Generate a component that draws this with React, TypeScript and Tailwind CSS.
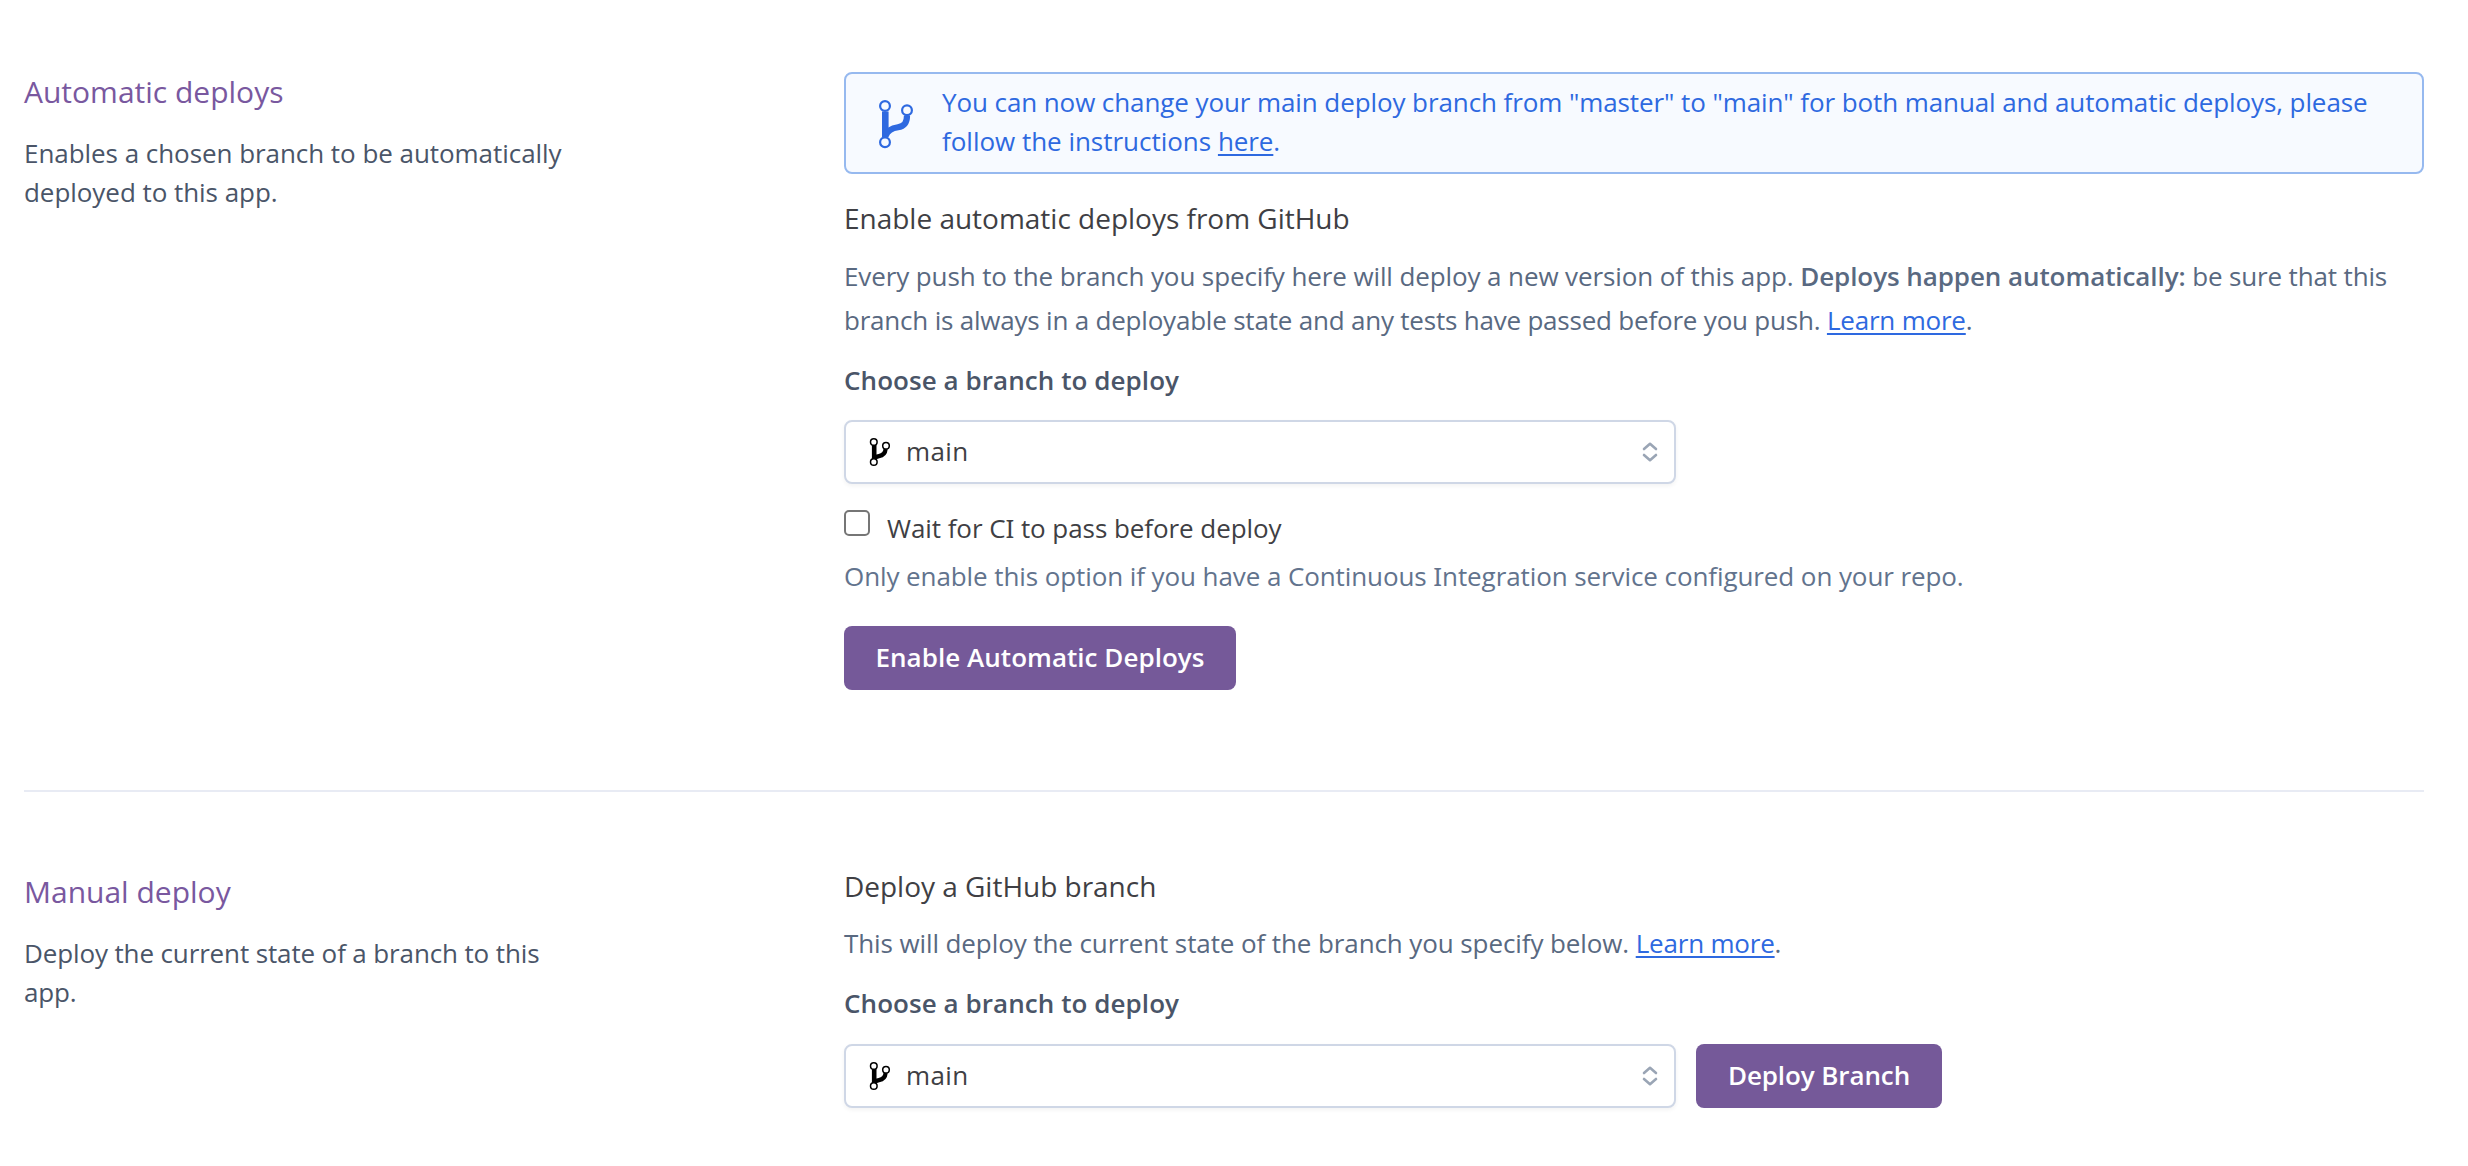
function BannerBranchIcon() {
  return (
    <svg width="36" height="50" viewBox="0 0 36 50" fill="none" stroke="#2e69e0" className="shrink-0">
      <path d="M7.3 12.5V38" strokeWidth="6.6" />
      <path d="M29 16.5C29 24.5 26 27.3 20 28.3C13 29.4 9.5 31.5 7.8 36.5" strokeWidth="6.2" />
      <circle cx="7" cy="7" r="4.9" strokeWidth="2.2" fill="#f7faff" />
      <circle cx="29" cy="11.3" r="4.9" strokeWidth="2.2" fill="#f7faff" />
      <circle cx="7" cy="43.3" r="4.9" strokeWidth="2.2" fill="#f7faff" />
    </svg>
  );
}

function BranchIcon() {
  return (
    <svg width="22" height="30" viewBox="0 0 22 30" fill="none" stroke="#000" className="shrink-0">
      <path d="M5.2 8V22" strokeWidth="4.6" />
      <path d="M16.6 12C16.2 17 13 18.6 10 19.1C7.5 19.5 6 20.2 5 22" strokeWidth="4.2" />
      <circle cx="4.8" cy="5" r="3.3" strokeWidth="1.5" fill="#fff" />
      <circle cx="17" cy="8.7" r="3.3" strokeWidth="1.5" fill="#fff" />
      <circle cx="4.8" cy="25" r="3.3" strokeWidth="1.5" fill="#fff" />
    </svg>
  );
}

function BranchSelect() {
  return (
    <div className="flex h-16 w-[832px] items-center rounded-lg border-2 border-[#cfd7e6] bg-white pr-4 pl-[23px] shadow-[0_2px_4px_rgba(0,0,0,0.05)]">
      <BranchIcon />
      <span className="mb-0.5 ml-[15px] text-[26px] leading-[40px] tracking-[0.4px] text-[#3f3f44]">main</span>
      <svg
        width="16"
        height="22"
        viewBox="0 0 16 22"
        fill="none"
        stroke="#9aa5b5"
        strokeWidth="2.6"
        strokeLinecap="round"
        strokeLinejoin="round"
        className="ml-auto"
      >
        <path d="M2 8L8 2.8L14 8M2 14L8 19.2L14 14" />
      </svg>
    </div>
  );
}

const link = "text-[#2e69e0] underline decoration-2 underline-offset-[3px]";

export default function App() {
  return (
    <main className="min-h-[1166px] bg-white pr-[44px] pl-6 font-['Open_Sans','Noto_Sans',sans-serif] text-[26px]">
      <section className="flex h-[790px] pt-[72px]">
        <div className="w-[820px] shrink-0">
          <h2 className="text-[30px] leading-[39px] text-[#79589f]">Automatic deploys</h2>
          <p className="mt-[23px] w-[560px] leading-[39px] tracking-[-0.05px] text-[#4a5568]">
            Enables a chosen branch to be automatically deployed to this app.
          </p>
        </div>
        <div className="w-[1580px]">
          <div className="flex h-[102px] items-start rounded-lg border-2 border-[#96b9ef] bg-[#f7faff]">
            <div className="pt-[25px] pl-8">
              <BannerBranchIcon />
            </div>
            <p className="mt-[9px] ml-[28px] leading-[39px] tracking-[-0.091px] text-[#2e69e0]">
              You can now change your main deploy branch from "master" to "main" for both manual and automatic deploys, please
              <br />
              <span className="tracking-[-0.02px]">follow the instructions </span>
              <a className={link}>here</a>.
            </p>
          </div>
          <h3 className="mt-6 text-[28px] leading-[40px] tracking-[-0.012px] text-[#3f3f44]">
            Enable automatic deploys from GitHub
          </h3>
          <p className="mt-4 leading-[44px] text-[#596981]">
            <span className="tracking-[-0.11px]">
              Every push to the branch you specify here will deploy a new version of this app.{" "}
            </span>
            <b className="font-semibold tracking-[-0.075px]">Deploys happen automatically:</b>
            <span className="tracking-[-0.15px]"> be sure that this</span>
            <br />
            <span className="tracking-[-0.205px]">
              branch is always in a deployable state and any tests have passed before you push.{" "}
              <a className={link}>Learn more</a>.
            </span>
          </p>
          <h4 className="mt-[18px] leading-[40px] font-semibold tracking-[0.065px] text-[#4a5568]">
            Choose a branch to deploy
          </h4>
          <div className="mt-5">
            <BranchSelect />
          </div>
          <label className="mt-6 flex items-start">
            <span className="mt-0.5 size-[26px] rounded-[5px] border-2 border-[#767676] bg-white" />
            <span className="ml-[17px] leading-[40px] tracking-[-0.07px] text-[#3f3f44]">
              Wait for C<span className="font-['Noto_Sans']">I</span> to pass before deploy
            </span>
          </label>
          <p className="mt-2 leading-[40px] tracking-[-0.09px] text-[#62738d]">
            Only enable this option if you have a Continuous <span className="font-['Noto_Sans']">I</span>ntegration
            service configured on your repo.
          </p>
          <button className="mt-[30px] flex h-16 w-[392px] items-center justify-center rounded-lg bg-[#755999] pb-0.5 leading-[40px] font-semibold tracking-[0.036px] text-white">
            Enable Automatic Deploys
          </button>
        </div>
      </section>
      <hr className="h-0.5 border-0 bg-[#e8ebf4]" />
      <section className="flex">
        <div className="w-[820px] shrink-0 pt-20">
          <h2 className="text-[30px] leading-[39px] text-[#79589f]">Manual deploy</h2>
          <p className="mt-[23px] w-[540px] leading-[39px] tracking-[-0.13px] text-[#4a5568]">
            Deploy the current state of a branch to this app.
          </p>
        </div>
        <div className="pt-[74px]">
          <h3 className="text-[28px] leading-[40px] tracking-[-0.02px] text-[#3f3f44]">Deploy a GitHub branch</h3>
          <p className="mt-[15px] leading-[44px] tracking-[-0.1px] text-[#596981]">
            This will deploy the current state of the branch you specify below.{" "}
            <a className={`${link} tracking-[-0.2px]`}>Learn more</a>.
          </p>
          <h4 className="mt-[18px] leading-[40px] font-semibold tracking-[0.065px] text-[#4a5568]">
            Choose a branch to deploy
          </h4>
          <div className="mt-[21px] flex gap-5">
            <BranchSelect />
            <button className="flex h-16 w-[246px] items-center justify-center rounded-lg bg-[#755999] pb-0.5 leading-[40px] font-semibold tracking-[-0.098px] text-white">
              Deploy Branch
            </button>
          </div>
        </div>
      </section>
    </main>
  );
}
